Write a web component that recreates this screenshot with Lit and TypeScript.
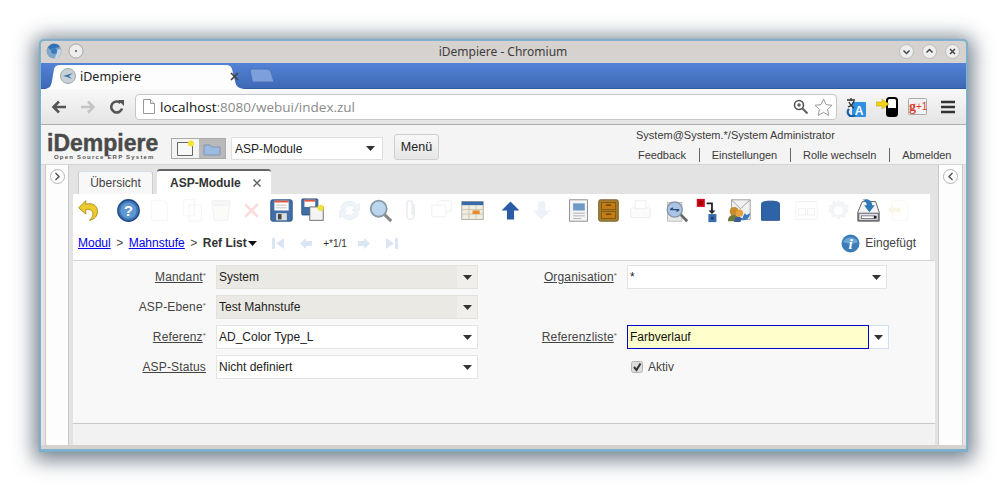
import { css, html, LitElement, svg } from 'lit'
import { customElement } from 'lit/decorators.js'

const ic = (w: number, h: number, body: unknown) =>
  html`<svg width=${w} height=${h} viewBox="0 0 ${w} ${h}">${body}</svg>`

// toolbar icons, drawn on a 28x28 box; faint ones are the disabled state
const tools: Array<{ w: number; faint?: boolean; i: unknown }> = [
  { w: 40, i: svg`<path d="M11 3 3 11l8 7v-5c5-1 8 1 8 5 0 3-2 5-4 7 6-1 9-5 9-10 0-7-6-10-13-8z" fill="#ecca30" stroke="#a88a10"/>` },
  { w: 31, i: svg`<circle cx="14" cy="14" r="12" fill="#3f74b4" stroke="#1d4a86" stroke-width="1.5"/><circle cx="14" cy="14" r="9" fill="#5f97d0"/><text x="14" y="20" font-family="Liberation Sans" font-weight="700" font-size="17" fill="#fff" text-anchor="middle">?</text>` },
  { w: 33, faint: true, i: svg`<path d="M5 3h14l4 4v18H5z" fill="#fdfdf4" stroke="#d8d8d8"/>` },
  { w: 28, faint: true, i: svg`<path d="M4 2h12v18H4z M10 8h14v18H10z" fill="#fff" stroke="#ccc"/>` },
  { w: 31, faint: true, i: svg`<path d="M5 8h19l-2 17H7z" fill="#eef2e4" stroke="#bbb"/><rect x="4" y="3" width="21" height="5" rx="2" fill="#ddd" stroke="#bbb"/>` },
  { w: 30, faint: true, i: svg`<path d="m7 7 14 14M21 7 7 21" stroke="#e66" stroke-width="3"/>` },
  { w: 31, i: svg`<rect x="2" y="2" width="24" height="24" rx="2" fill="#3f6ea8" stroke="#28507f"/><rect x="6" y="3" width="16" height="11" fill="#fff"/><rect x="6" y="3" width="16" height="2" fill="#e2533a"/><path d="M8 8h12M8 11h12" stroke="#bbb"/><rect x="8" y="17" width="12" height="8" fill="#ddd"/><rect x="10" y="18" width="4" height="6" fill="#444"/>` },
  { w: 37, i: svg`<rect x="2" y="1" width="18" height="18" rx="1" fill="#3f6ea8" stroke="#28507f"/><rect x="5" y="2" width="12" height="8" fill="#fff"/><rect x="5" y="2" width="12" height="2" fill="#e2533a"/><rect x="11" y="10" width="15" height="15" fill="#f4f4f4" stroke="#666"/><circle cx="23" cy="11" r="3.5" fill="#f2e23c"/>` },
  { w: 31, faint: true, i: svg`<path d="M4 12a10 10 0 0 1 18-4l3-2v8h-8l3-3a7 7 0 0 0-12 2zM24 16a10 10 0 0 1-18 4l-3 2v-8h8l-3 3a7 7 0 0 0 12-2z" fill="#b9d0ea" stroke="#8fb0d6"/>` },
  { w: 30, i: svg`<path d="m18 18 8 8" stroke="#888" stroke-width="3.5"/><circle cx="12" cy="12" r="9" fill="#bcd6ee" stroke="#8a98a6" stroke-width="2"/>` },
  { w: 31, faint: true, i: svg`<path d="M18 7v13a4 4 0 0 1-8 0V6a3 3 0 0 1 6 0v13" fill="none" stroke="#a9b6cc" stroke-width="2"/>` },
  { w: 31, faint: true, i: svg`<rect x="10" y="3" width="15" height="12" rx="2" fill="#fff" stroke="#bbb"/><rect x="3" y="8" width="16" height="13" rx="2" fill="#fff" stroke="#bbb"/>` },
  { w: 38, i: svg`<rect x="2" y="4" width="24" height="20" fill="#f1ede0" stroke="#a8a8a0"/><rect x="2" y="4" width="24" height="4" fill="#3a6aa8"/><path d="M2 13h24M2 18h24M10 8v16M18 8v16" stroke="#c8c4b4"/><rect x="14" y="14" width="8" height="4" fill="#e8892c"/>` },
  { w: 31, i: svg`<path d="M14 4 4 14h6v10h8V14h6z" fill="#2c5aa6"/>` },
  { w: 37, faint: true, i: svg`<path d="M14 24 4 14h6V4h8v10h6z" fill="#b3c6e2"/>` },
  { w: 30, i: svg`<rect x="4" y="2" width="20" height="24" fill="#f4f4f4" stroke="#888"/><rect x="8" y="6" width="13" height="8" fill="#6e9ac8"/><path d="M8 17h13M8 20h13M8 23h9" stroke="#aaa"/>` },
  { w: 32, i: svg`<rect x="3" y="2" width="22" height="24" rx="2" fill="#a97e2c" stroke="#6e5a22"/><rect x="6" y="5" width="16" height="8" fill="#c67c14" stroke="#7a5610"/><rect x="6" y="15" width="16" height="8" fill="#c67c14" stroke="#7a5610"/><path d="M11 8h6M11 18h6" stroke="#5a3c08" stroke-width="1.5"/>` },
  { w: 36, faint: true, i: svg`<rect x="3" y="11" width="22" height="11" rx="2" fill="#f0f0f0" stroke="#aaa"/><rect x="8" y="3" width="12" height="9" fill="#fff" stroke="#aaa"/>` },
  { w: 31, i: svg`<rect x="4" y="5" width="16" height="21" fill="#e8e8e8" stroke="#bbb"/><path d="m18 18 8 8" stroke="#666" stroke-width="3"/><circle cx="12" cy="13" r="8.5" fill="#a9c4e4" stroke="#8a98a6" stroke-width="1.5"/><path d="M7 13h10M7 13l3-2M17 13l-3 2" stroke="#2c4a78" stroke-width="1.5"/>` },
  { w: 32, i: svg`<rect x="2" y="1" width="9" height="9" fill="#d40a1e"/><rect x="4" y="3" width="5" height="5" fill="#a00"/><path d="M13 6h6v9" fill="none" stroke="#222" stroke-width="2"/><path d="m15 14h8l-4 4z" fill="#222"/><rect x="15" y="18" width="9" height="9" fill="#3a6cb0"/><rect x="18" y="21" width="3" height="3" fill="#1c3c70"/>` },
  { w: 31, i: svg`<path d="M5 2h21v22H5z" fill="#f0f0f0" stroke="#999"/><path d="m5 2 10 10L26 2" fill="none" stroke="#999"/><circle cx="8" cy="15" r="5" fill="#c88a2c"/><path d="M1 26c0-6 4-7 7-7 2 0 4 1 5 3v4z" fill="#6e7a3c"/><circle cx="14" cy="17" r="4" fill="#e8a03c"/><path d="M8 27c0-5 3-6 6-6l3 2-2 4z" fill="#3a5a9c"/><path d="M17 25c6 0 8-3 9-8l-4 2-2-2c-2 3-3 5-3 8z" fill="#3a78c0"/>` },
  { w: 36, i: svg`<path d="M5 5c3-2 15-2 18 0 1 0 1 1 1 2v18H4V7c0-1 0-2 1-2z" fill="#2f63a8" stroke="#1f4a82"/>` },
  { w: 32, faint: true, i: svg`<rect x="2" y="4" width="24" height="20" fill="#fff" stroke="#ccc"/><rect x="5" y="12" width="8" height="7" fill="none" stroke="#bbb"/><rect x="15" y="12" width="8" height="7" fill="none" stroke="#bbb"/>` },
  { w: 30, faint: true, i: svg`<path d="M14 1l2 4 4-2 1 4 5 1-2 4 2 3-4 2 0 5-5-1-3 4-3-4-5 1 0-5-4-2 2-3-2-4 5-1 1-4 4 2z" fill="#c5cfe0"/><circle cx="14" cy="14" r="5" fill="#fff"/>` },
  { w: 30, i: svg`<path d="M7 4h15l4 12v10H2V16z" fill="#f4f4f4" stroke="#555"/><rect x="3" y="17" width="22" height="8" fill="#dde" stroke="#555"/><rect x="6" y="20" width="15" height="3" fill="#fff" stroke="#777"/><rect x="20" y="20" width="3" height="3" fill="#222"/><path d="M7 2c7-2 11 1 11 6h3l-6 8-6-8h3c0-3-2-5-5-6z" fill="#2f78b8"/>` },
  { w: 28, faint: true, i: svg`<path d="M7 3h13l4 4v18H7z" fill="#fdfdf0" stroke="#ddd"/><path d="M2 13l6-5v3h8v5H8v3z" fill="#e8dc88"/>` },
]

@customElement('app-root')
export class AppRoot extends LitElement {
  static styles = css`
    :host {
      display: block;
      width: 1007px;
      height: 490px;
      background: #fff;
      overflow: hidden;
      font-family: 'Liberation Sans', Arial, sans-serif;
      color: #333;
    }
    a { color: #0000ee; }
    svg { display: block; }
    .win {
      margin: 40px 0 0 40px;
      width: 925px;
      height: 408px;
      border: 1px solid #7fb2d0;
      border-width: 1px 1px 2px 1px;
      border-radius: 4px 4px 0 0;
      box-shadow: 0 0 1px 1px #78aecb, 0 3px 20px 6px rgba(30, 50, 70, 0.62);
      background: #d6d2cf;
      display: flex;
      flex-direction: column;
    }
    .title {
      height: 22px;
      box-sizing: border-box;
      padding: 0 6px 2px 5px;
      display: grid;
      grid-template-columns: 1fr auto 1fr;
      align-items: center;
      font: 12px 'Noto Sans', sans-serif;
      color: #3c3c3c;
    }
    .tl, .tr { display: flex; gap: 6px; align-items: center; }
    .tr { justify-content: flex-end; gap: 8px; }
    .tabs {
      height: 26px;
      background: linear-gradient(#5482d6, #3e69b6);
      border-bottom: 1px solid #2f5a9c;
      box-sizing: border-box;
      display: flex;
      align-items: flex-end;
      padding-left: 2px;
    }
    .ctab {
      position: relative;
      width: 204px;
      height: 25px;
      margin-bottom: -1px;
      font: 12.5px 'Noto Sans', sans-serif;
      color: #222;
    }
    .ctab svg.shape { position: absolute; inset: 0; }
    .ctab .row {
      position: relative;
      display: flex;
      align-items: center;
      height: 24px;
      padding: 0 8px 0 17px;
      gap: 4px;
    }
    .ctab .name { flex: 1; }
    .newtab { margin: 0 0 5px 2px; }
    .bar {
      height: 36px;
      box-sizing: border-box;
      background: linear-gradient(#f8f8f8, #e4e4e4);
      border-bottom: 1px solid #adadad;
      display: flex;
      align-items: center;
      padding-left: 10px;
    }
    .nav { display: flex; gap: 13px; align-items: center; margin-right: 10px; }
    .url {
      width: 702px;
      height: 26px;
      box-sizing: border-box;
      background: #fff;
      border: 1px solid #c6c6c6;
      border-radius: 4px;
      display: flex;
      align-items: center;
      padding: 0 3px 0 7px;
      gap: 5px;
      font: 13.5px 'Open Sans', sans-serif;
      color: #111;
    }
    .url .grey { color: #8a8a8a; }
    .url .sp { flex: 1; }
    .exts { display: flex; align-items: center; gap: 10px; margin-left: 9px; }
    .exts .burger { margin-left: 4px; }
    .head {
      height: 40px;
      box-sizing: border-box;
      background: #f4f4f4;
      border-bottom: 1px solid #d4d4d4;
      display: flex;
      padding-left: 6px;
      position: relative;
    }
    .logo { width: 124px; padding-top: 9px; line-height: 1; color: #4a4a4a; }
    .logo b { display: block; font-size: 23px; line-height: 19px; -webkit-text-stroke: 0.4px #4a4a4a; }
    .logo small { display: block; font-size: 6px; font-weight: 700; letter-spacing: 1.2px; padding-left: 7px; margin-top: 1px; color: #555; white-space: nowrap; }
    .modes {
      margin-top: 13px;
      height: 21px;
      width: 55px;
      box-sizing: border-box;
      border: 1px solid #aaa;
      display: flex;
      background: #f4f4f4;
    }
    .modes span { flex: 1; display: flex; align-items: center; justify-content: center; }
    .modes .off { background: #b9b9b9; }
    .modesel {
      margin: 12px 0 0 5px;
      width: 152px;
      height: 23px;
      box-sizing: border-box;
      background: #fff;
      border: 1px solid #e0e0e0;
      display: flex;
      align-items: center;
      justify-content: space-between;
      font-size: 12px;
      padding: 0 7px 0 3px;
      color: #222;
    }
    .menu {
      margin: 9px 0 0 11px;
      width: 45px;
      height: 26px;
      box-sizing: border-box;
      border: 1px solid #cfcfcf;
      border-radius: 3px;
      background: linear-gradient(#f8f8f8, #e6e6e6);
      display: flex;
      align-items: center;
      justify-content: center;
      font-size: 12.5px;
      color: #222;
    }
    .user { margin-left: auto; width: 331px; font-size: 11px; color: #3a3a3a; }
    .user .who { padding: 4px 0 0 1px; height: 13px; line-height: 13px; }
    .user .links { display: flex; margin-top: 6px; line-height: 14px; height: 14px; padding-left: 3px; letter-spacing: -0.06px; }
    .user .links span { padding-right: 13px; margin-right: 12px; border-right: 1px solid #666; }
    .user .links span:last-child { border: 0; padding: 0; margin: 0; }
    .main { flex: 1; display: flex; min-height: 0; background: #e6e4e2; }
    .side {
      background: #fdfdfd;
      border: solid #c9c9c9;
      border-width: 0 1px;
      box-sizing: border-box;
      display: flex;
      justify-content: center;
      padding-top: 4px;
    }
    .side.l { width: 24px; margin-left: 4px; }
    .side.r { width: 25px; margin-right: 3px; }
    .split { background: #e3e3e3; }
    .split.l { width: 4px; }
    .split.r { width: 3px; }
    .round {
      width: 15px;
      height: 15px;
      box-sizing: border-box;
      border: 1px solid #b4b4b4;
      border-radius: 50%;
      background: #fff;
      display: flex;
      align-items: center;
      justify-content: center;
    }
    .center { width: 862px; display: flex; flex-direction: column; }
    .wtabs {
      height: 29px;
      box-sizing: border-box;
      background: #e3e3e3;
      display: flex;
      align-items: flex-end;
      gap: 4px;
      padding-left: 5px;
      font-size: 12px;
    }
    .wtab {
      width: 75px;
      height: 23px;
      box-sizing: border-box;
      background: #f8f8f8;
      border: 1px solid #ccc;
      border-top-color: #cfe2ee;
      border-bottom: 0;
      border-radius: 3px 3px 0 0;
      display: flex;
      align-items: center;
      justify-content: center;
      color: #444;
    }
    .wtab.on {
      width: 114px;
      height: 25px;
      background: #fff;
      border: 0;
      border-top: 2px solid #666;
      font-weight: 700;
      color: #333;
      justify-content: flex-start;
      padding-left: 13px;
      gap: 12px;
    }
    .tools {
      background: #fff;
      height: 32px;
      display: flex;
      align-items: center;
      padding-left: 1px;
      margin-right: 5px;
    }
    .tool { display: flex; flex: none; padding-left: 1.5px; box-sizing: border-box; }
    .tool.faint { opacity: 0.22; }
    .crumbs {
      background: #fff;
      height: 34px;
      margin-right: 5px;
      box-sizing: border-box;
      display: flex;
      align-items: center;
      padding: 0 14px 0 5px;
      font-size: 12px;
      gap: 5.5px;
      color: #444;
    }
    .crumbs .cur { font-weight: 700; color: #333; display: flex; align-items: center; gap: 1px; }
    .pager { display: flex; align-items: center; margin-left: 9px; font-size: 10px; color: #333; gap: 10px; }
    .pager .wide { margin-left: 4px; }
    .status { margin-left: auto; display: flex; align-items: center; gap: 5px; color: #444; }
    .form {
      flex: 1;
      background: #f8f8f8;
      border-top: 1px solid #d4d4d4;
      display: grid;
      grid-template-columns: 133px 262px 129px 260px;
      grid-auto-rows: 30px;
      column-gap: 10px;
      padding-top: 1px;
      font-size: 12px;
      align-items: center;
      color: #444;
    }
    .lb { text-align: right; letter-spacing: 0.15px; }
    .lb u { text-underline-offset: 1px; }
    .lb sup { font-size: 8px; line-height: 0; vertical-align: 3px; color: #666; }
    .sel {
      height: 24px;
      box-sizing: border-box;
      background: #fff;
      border: 1px solid #e4e4e4;
      display: flex;
      align-items: center;
      color: #222;
      padding-left: 2px;
    }
    .sel .v { flex: 1; }
    .sel .btn { width: 20px; height: 100%; display: flex; align-items: center; justify-content: center; }
    .sel.ro { background: #ebe9e4; border-color: #e4e2de; }
    .sel.ro .btn { background: #f0efeb; }
    .focus { display: flex; height: 24px; width: 262px; }
    .focus .v {
      flex: 1;
      background: #ffffcc;
      border: 1px solid #0000cc;
      box-sizing: border-box;
      display: flex;
      align-items: center;
      padding-left: 2px;
      color: #111;
    }
    .focus .btn {
      width: 20px;
      box-sizing: border-box;
      background: #fff;
      border: 1px solid #cfe2f4;
      border-left: 0;
      display: flex;
      align-items: center;
      justify-content: center;
    }
    .chk { display: flex; align-items: center; gap: 5px; padding-left: 4px; }
    .foot {
      height: 22px;
      box-sizing: border-box;
      background: #f2f2f2;
      border-top: 1px solid #c8c8c8;
    }
    .bottom { height: 4px; background: #d6d2cf; }
  `

  private caret(color = '#333') {
    return ic(9, 5, svg`<path d="M0 0h9L4.5 5z" fill=${color}/>`)
  }

  private wbtn(d: string) {
    return html`<svg width="15" height="15" viewBox="0 0 15 15"><circle cx="7.5" cy="7.5" r="7" fill="#eee" stroke="#bbb"/><path d=${d} fill="none" stroke="#444" stroke-width="1.5"/></svg>`
  }

  private field(label: string, req: boolean, link: boolean, value: string, ro = false) {
    return html`
      <div class="lb">${link ? html`<u>${label}</u>` : label}${req ? html`<sup>*</sup>` : ''}</div>
      <div class="sel ${ro ? 'ro' : ''}">
        <span class="v">${value}</span><span class="btn">${this.caret()}</span>
      </div>
    `
  }

  protected render(): unknown {
    return html`
      <div class="win">
        <div class="title">
          <div class="tl">
            ${ic(16, 16, svg`<circle cx="8" cy="8" r="7.5" fill="#7fa6c8"/><path d="M2 4.500a7 7 0 0 1 12-.5L9 5a3.500 3.500 0 0 0-4 2z" fill="#2f6fb8"/><path d="M14.500 6a7 7 0 0 1-6 9.500L11 10a3.500 3.500 0 0 0 0-3z" fill="#c8d8e4"/><circle cx="8" cy="8" r="3" fill="#3a7cc0"/>`)}
            ${ic(16, 16, svg`<circle cx="8" cy="8" r="7" fill="#eee" stroke="#aaa"/><circle cx="8" cy="8" r="1" fill="#555"/>`)}
          </div>
          <div>iDempiere - Chromium</div>
          <div class="tr">
            ${this.wbtn('M4.5 6.5l3 3 3-3')}
            ${this.wbtn('M4.5 8.5l3-3 3 3')}
            ${this.wbtn('M5 5l5 5M10 5l-5 5')}
          </div>
        </div>

        <div class="tabs">
          <div class="ctab">
            <svg class="shape" width="204" height="25" viewBox="0 0 204 25"><path d="M0 25c6 0 8-2 9-8l2-12c1-3 3-4 6-4h166c3 0 5 1 6 4l3 12c1 6 4 8 12 8z" fill="#fdfdfd"/></svg>
            <div class="row">
              ${ic(16, 16, svg`<circle cx="8" cy="8" r="7.5" fill="#c9d0d6" stroke="#9aa"/><path d="M3 8l10-3-4 3 3 3-5-2z" fill="#3a78a8"/>`)}
              <span class="name">iDempiere</span>
              ${ic(9, 9, svg`<path d="M1 1l7 7M8 1L1 8" stroke="#444" stroke-width="1.7"/>`)}
            </div>
          </div>
          <svg class="newtab" width="26" height="15" viewBox="0 0 26 15"><path d="M1 1h17c2 0 3 1 4 3l3 10H5c-1 0-2 0-2-2z" fill="#7d9fdc" stroke="#4a72ba"/></svg>
        </div>

        <div class="bar">
          <div class="nav">
            ${ic(16, 14, svg`<path d="M15 7H3M8 1.5 2.5 7 8 12.5" fill="none" stroke="#555" stroke-width="2.6"/>`)}
            ${ic(16, 14, svg`<path d="M1 7h12M8 1.5 13.5 7 8 12.5" fill="none" stroke="#c4c4c4" stroke-width="2.6"/>`)}
            ${ic(16, 16, svg`<path d="M13 9.5A5.5 5.5 0 1 1 11.5 4" fill="none" stroke="#555" stroke-width="2.6"/><path d="M9 1l6 0 0 6z" fill="#555"/>`)}
          </div>
          <div class="url">
            ${ic(12, 15, svg`<path d="M.5.5h7l4 4v10H.5z" fill="#fff" stroke="#999"/><path d="M7.5.5v4h4" fill="#eee" stroke="#999"/>`)}
            <span><span>localhost</span><span class="grey">:8080/webui/index.zul</span></span>
            <span class="sp"></span>
            ${ic(16, 16, svg`<circle cx="6" cy="6" r="4.5" fill="#fff" stroke="#555" stroke-width="1.6"/><path d="M4 6h4M6 4v4" stroke="#333"/><path d="m9.5 9.5 5 5" stroke="#666" stroke-width="2.2"/>`)}
            ${ic(19, 18, svg`<path d="M9.5 1l2.6 5.6 6 .7-4.5 4.1 1.2 6L9.5 14.400l-5.300 3 1.200-6L1 7.300l6-.7z" fill="#fff" stroke="#999"/>`)}
          </div>
          <div class="exts">
            ${ic(20, 20, svg`<rect x="6" y="5" width="14" height="15" rx="1" fill="#2f8fe0"/><text x="13" y="18" font-family="Liberation Sans" font-weight="700" font-size="12" fill="#fff" text-anchor="middle">A</text><path d="M1 3h8M5 1v3M2 10c3-1 5-3 6-6M3 5c1 3 3 5 5 6" fill="none" stroke="#333" stroke-width="1.3"/><path d="M3 12a4 4 0 1 0 6 6" fill="none" stroke="#1a5fa8" stroke-width="2.400"/>`)}
            ${ic(22, 20, svg`<rect x="11" y="1" width="10" height="18" rx="2.500" fill="#fff" stroke="#000" stroke-width="2"/><rect x="11" y="11" width="10" height="8" rx="2" fill="#000"/><path d="M0 5h6V2l7 5-7 5V9H0z" fill="#f2d216" stroke="#b89c10" stroke-width=".5"/>`)}
            ${ic(19, 17, svg`<rect x=".5" y=".5" width="18" height="16" rx="1" fill="#f2f2f2" stroke="#aaa"/><text x="1" y="13" font-family="Liberation Serif" font-weight="700" font-size="14" fill="#d8402c">g</text><text x="8" y="12" font-family="Liberation Sans" font-size="10" fill="#d8402c">+1</text>`)}
            <span class="burger">${ic(14, 14, svg`<path d="M0 2h14M0 7h14M0 12h14" stroke="#333" stroke-width="2.700"/>`)}</span>
          </div>
        </div>

        <div class="head">
          <div class="logo"><b>iDempiere</b><small>Open Source ERP System</small></div>
          <div class="modes">
            <span>${ic(18, 17, svg`<path d="M1.500 2.500h15v13h-15z" fill="#f8f8f8" stroke="#666"/><circle cx="15" cy="3.500" r="3" fill="#f6e62c"/>`)}</span>
            <span class="off">${ic(18, 14, svg`<path d="M1 3h6l2 2h8v8H1z" fill="#9dbbe0" stroke="#7c94b4"/>`)}</span>
          </div>
          <div class="modesel"><span>ASP-Module</span>${this.caret()}</div>
          <div class="menu">Menü</div>
          <div class="user">
            <div class="who">System@System.*/System Administrator</div>
            <div class="links">
              <span>Feedback</span><span>Einstellungen</span><span>Rolle wechseln</span><span>Abmelden</span>
            </div>
          </div>
        </div>

        <div class="main">
          <div class="side l">
            <span class="round">${ic(7, 9, svg`<path d="M1.500 1l3.500 3.500L1.500 8" fill="none" stroke="#555" stroke-width="1.500"/>`)}</span>
          </div>
          <div class="split l"></div>
          <div class="center">
            <div class="wtabs">
              <div class="wtab">Übersicht</div>
              <div class="wtab on">
                <span>ASP-Module</span>
                ${ic(8, 8, svg`<path d="M.5.500l7 7M7.500.500l-7 7" stroke="#666" stroke-width="1.500"/>`)}
              </div>
            </div>
            <div class="tools">
              ${tools.map(
                (t) => html`<span class="tool ${t.faint ? 'faint' : ''}" style="width:${t.w}px"><svg width="25" height="25" viewBox="0 0 28 28">${t.i}</svg></span>`,
              )}
            </div>
            <div class="crumbs">
              <a href="#">Modul</a><span>&gt;</span><a href="#">Mahnstufe</a><span>&gt;</span>
              <span class="cur">Ref List ${this.caret('#111')}</span>
              <div class="pager">
                ${ic(14, 13, svg`<path d="M1 1h3v11H1zM13 1v11L5 6.500z" fill="#dbe6f4"/>`)}
                <span class="wide">${ic(14, 13, svg`<path d="M7 1v3h6v5H7v3L1 6.500z" fill="#dbe6f4"/>`)}</span>
                <span>+*1/1</span>
                ${ic(14, 13, svg`<path d="M7 1v3H1v5h6v3l6-5.500z" fill="#dbe6f4"/>`)}
                <span class="wide">${ic(14, 13, svg`<path d="M13 1h-3v11h3zM1 1v11l8-5.500z" fill="#dbe6f4"/>`)}</span>
              </div>
              <div class="status">
                ${ic(19, 19, svg`<circle cx="9.500" cy="9.500" r="9" fill="#3a7cb8"/><path d="M2 8a8 7 0 0 1 15 0c-4 2-10 2-15 0z" fill="#6ea6d6"/><text x="9.500" y="15" font-family="Liberation Serif" font-style="italic" font-weight="700" font-size="15" fill="#fff" text-anchor="middle">i</text>`)}
                <span>Eingefügt</span>
              </div>
            </div>
            <div class="form">
              ${this.field('Mandant', true, true, 'System', true)}
              ${this.field('Organisation', true, true, '*')}
              ${this.field('ASP-Ebene', true, false, 'Test Mahnstufe', true)}
              <div></div><div></div>
              ${this.field('Referenz', true, true, 'AD_Color Type_L')}
              <div class="lb"><u>Referenzliste</u><sup>*</sup></div>
              <div class="focus"><span class="v">Farbverlauf</span><span class="btn">${this.caret()}</span></div>
              ${this.field('ASP-Status', false, true, 'Nicht definiert')}
              <div></div>
              <div class="chk">
                ${ic(12, 12, svg`<rect x=".5" y=".5" width="11" height="11" rx="2" fill="#ddd" stroke="#b4b4b4"/><path d="M3 6l2.500 3L9.500 2.500" fill="none" stroke="#333" stroke-width="2"/>`)}
                <span>Aktiv</span>
              </div>
            </div>
            <div class="foot"></div>
          </div>
          <div class="split r"></div>
          <div class="side r">
            <span class="round">${ic(7, 9, svg`<path d="M5.500 1L2 4.500 5.500 8" fill="none" stroke="#555" stroke-width="1.500"/>`)}</span>
          </div>
        </div>
        <div class="bottom"></div>
      </div>
    `
  }
}
